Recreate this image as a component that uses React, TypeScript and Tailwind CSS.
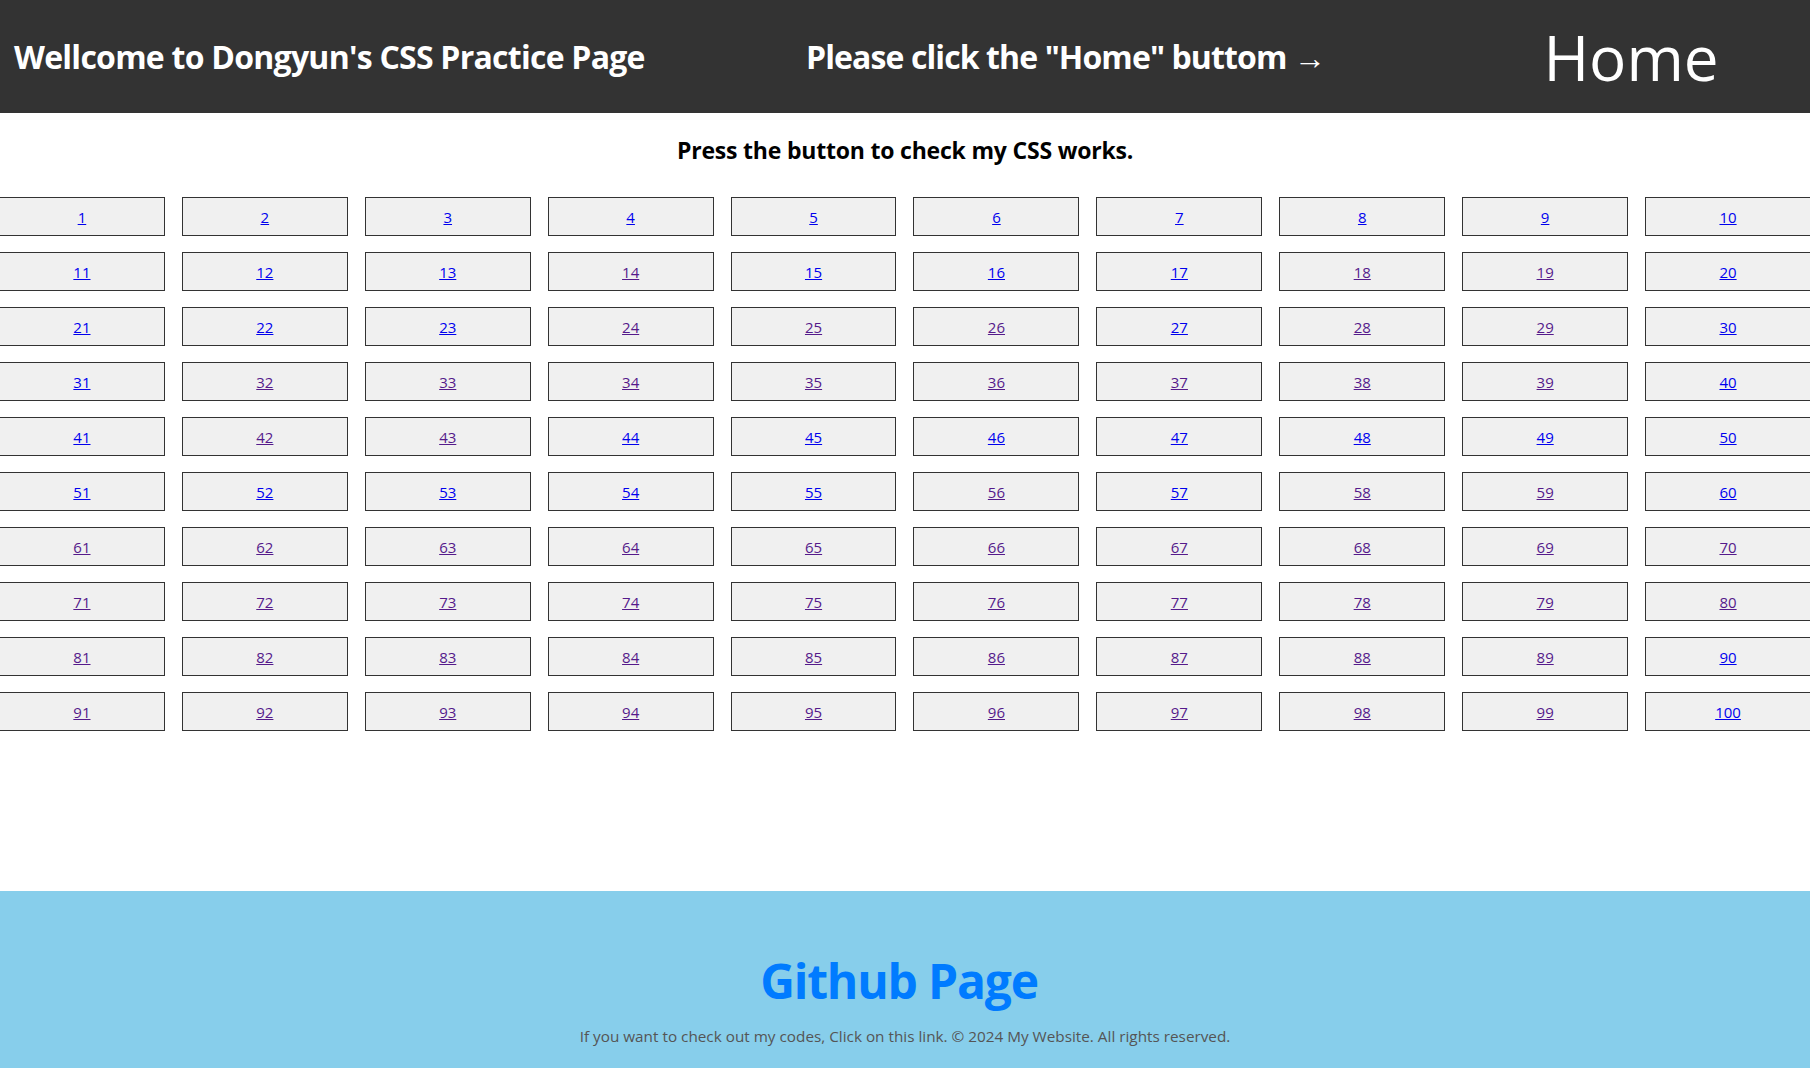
import React from "react";

const blue = new Set<number>([
  1, 2, 3, 4, 5, 6, 7, 8, 9, 10, 11, 12, 13, 15, 16, 17, 20, 21, 22, 23, 27, 30, 31, 40, 41, 44, 45, 46, 47, 48, 49, 50,
  51, 52, 53, 54, 55, 57, 60, 90, 100,
]);

export default function App() {
  const nums = Array.from({ length: 100 }, (_, i) => i + 1);
  return (
    <div className="min-h-screen flex flex-col overflow-x-hidden bg-white font-['Open_Sans',sans-serif]">
      <header className="h-[113px] shrink-0 bg-[#333333] flex items-center text-white">
        <h1 className="ml-[14px] w-[792px] shrink-0 text-[32px] leading-[32px] font-bold tracking-[-0.75px] whitespace-nowrap">
          Wellcome to Dongyun's CSS Practice Page
        </h1>
        <p className="flex-1 text-[32px] leading-[32px] font-bold tracking-[-0.9px] whitespace-nowrap">
          Please click the "Home" buttom →
        </p>
        <a href="#" className="w-[200px] mr-[79px] text-center text-[62px] leading-[64px] font-normal text-white">
          Home
        </a>
      </header>
      <main className="flex-1">
        <h2 className="mt-[25px] text-center text-[23px] leading-[24px] font-bold text-black tracking-[-0.2px]">
          Press the button to check my CSS works.
        </h2>
        <div className="-ml-[1px] mt-[35px] w-[1812px] grid grid-cols-10 gap-x-[17px] gap-y-[16px]">
          {nums.map((n) => (
            <div
              key={n}
              className="h-[39px] border border-[#333333] bg-[#f0f0f0] flex items-center justify-center"
            >
              <a
                href="#"
                className={
                  "text-[15px] leading-[16px] underline " + (blue.has(n) ? "text-[#0000ee]" : "text-[#551a8b]")
                }
              >
                {n}
              </a>
            </div>
          ))}
        </div>
      </main>
      <footer className="h-[177px] shrink-0 bg-[#87ceeb] flex flex-col items-center pt-[66px]">
        <a href="#" className="mr-[12px] text-[48px] leading-[48px] font-bold text-[#007bff] tracking-[-1.2px]">
          Github Page
        </a>
        <p className="mt-[23px] text-[15.3px] leading-[16px] text-[#555555]">
          If you want to check out my codes, Click on this link. © 2024 My Website. All rights reserved.
        </p>
      </footer>
    </div>
  );
}
